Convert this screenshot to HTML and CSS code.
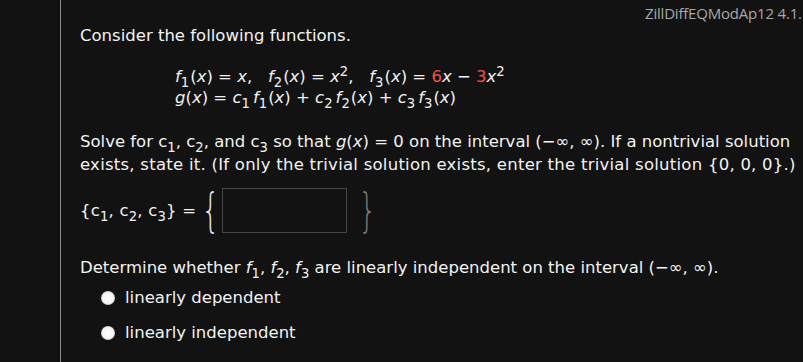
FILE: index.html
```html
<!DOCTYPE html>
<html lang="en">

<head>
    <meta charset="UTF-8">
    <title>ZillDiffEQModAp12 4.1</title>
    <link rel="stylesheet" href="styles.css">
</head>

<body>
    <div class="question">
        <div class="ref">ZillDiffEQModAp12 4.1.</div>

        <p class="intro">Consider the following functions.</p>

        <div class="equations">
            <div class="eq">
                <i>f</i><sub>1</sub>(<i>x</i>) = <i>x</i>,&nbsp;&nbsp;
                <i>f</i><sub>2</sub>(<i>x</i>) = <i>x</i><sup>2</sup>,&nbsp;&nbsp;
                <i>f</i><sub>3</sub>(<i>x</i>) = <span class="red">6</span><i>x</i> &minus; <span class="red">3</span><i>x</i><sup>2</sup>
            </div>
            <div class="eq">
                <i>g</i>(<i>x</i>) = <i>c</i><sub class="gap">1</sub><i>f</i><sub>1</sub>(<i>x</i>) + <i>c</i><sub class="gap">2</sub><i>f</i><sub>2</sub>(<i>x</i>) + <i>c</i><sub class="gap">3</sub><i>f</i><sub>3</sub>(<i>x</i>)
            </div>
        </div>

        <p class="text">
            Solve for <i class="up">c</i><sub>1</sub>, <i class="up">c</i><sub>2</sub>, and <i class="up">c</i><sub>3</sub> so that <i>g</i>(<i>x</i>) = 0 on the interval (&minus;&infin;, &infin;). If a nontrivial solution<br>
            <span class="wide">exists, state it. (If only the trivial solution exists, enter the trivial solution {0, 0, 0}.)</span>
        </p>

        <div class="answer">
            <span class="set">{<i>c</i><sub>1</sub>, <i>c</i><sub>2</sub>, <i>c</i><sub>3</sub>} =</span>
            <span class="brace">{</span>
            <input class="box" type="text">
            <span class="brace close">}</span>
        </div>

        <p class="text determine">
            Determine whether <i>f</i><sub>1</sub>, <i>f</i><sub>2</sub>, <i>f</i><sub>3</sub> are linearly independent on the interval (&minus;&infin;, &infin;).
        </p>

        <div class="choices">
            <label class="choice"><span class="radio"></span>linearly dependent</label>
            <label class="choice"><span class="radio"></span>linearly independent</label>
        </div>
    </div>
</body>

</html>
```

FILE: styles.css
```css
body {
    margin: 0;
    background-color: #121212;
    color: #f2f2f2;
    font-family: "DejaVu Sans", Verdana, sans-serif;
    font-size: 16.5px;
    overflow: hidden;
    height: 362px;
}

.question {
    margin-left: 60px;
    border-left: 1px solid #8a8a8a;
    padding-left: 19px;
    height: 362px;
    box-sizing: border-box;
}

.ref {
    white-space: nowrap;
    padding-left: 565px;
    line-height: 26px;
    font-family: "Open Sans", "Noto Sans", sans-serif;
    font-size: 15px;
    color: #a8a8a8;
    letter-spacing: -0.2px;
}

.intro {
    margin: -2px 0 0 0;
    line-height: 23px;
}

.equations {
    margin: 19px 0 0 95px;
    font-size: 16.5px;
    line-height: 21px;
}

.eq i {
    font-style: oblique;
}

.eq sub {
    padding-right: 1px;
}

.eq sub.gap {
    padding-right: 3px;
}

sub,
sup {
    font-size: 80%;
    line-height: 0;
}

sub {
    vertical-align: -0.4em;
}

sup {
    vertical-align: 0.45em;
}

.red {
    color: #f0553f;
}

.text {
    margin: 22px 0 0 0;
    line-height: 23px;
    white-space: nowrap;
}

.text .wide {
    letter-spacing: 0.25px;
}

.text i {
    font-style: oblique;
}

.text i.up {
    font-style: normal;
}

.answer {
    display: flex;
    align-items: center;
    margin-top: 10px;
    height: 48px;
}

.set {
    letter-spacing: 0.2px;
}

.set i {
    font-style: normal;
}

.brace {
    font-family: "DejaVu Sans", sans-serif;
    font-weight: 200;
    font-size: 46px;
    line-height: 48px;
    margin: 0 -4px 0 0;
    color: #e8e8e8;
    transform: scaleX(0.6);
}

.brace.close {
    color: #7a7a7a;
    margin: 0 0 0 6px;
}

.box {
    width: 125px;
    height: 45px;
    box-sizing: border-box;
    margin: 0;
    background-color: #121212;
    border: 1px solid #474747;
    border-radius: 0;
}

.determine {
    margin-top: 22px;
}

.choices {
    display: flex;
    flex-direction: column;
    gap: 12px;
    margin: 7px 0 0 21px;
}

.choice {
    display: flex;
    align-items: center;
    gap: 10px;
    height: 23px;
}

.radio {
    width: 14px;
    height: 14px;
    margin-top: 1px;
    border-radius: 50%;
    background: radial-gradient(circle, #ffffff 0, #f4f4f4 55%, #9a9a9a 85%, #121212 100%);
}
```
